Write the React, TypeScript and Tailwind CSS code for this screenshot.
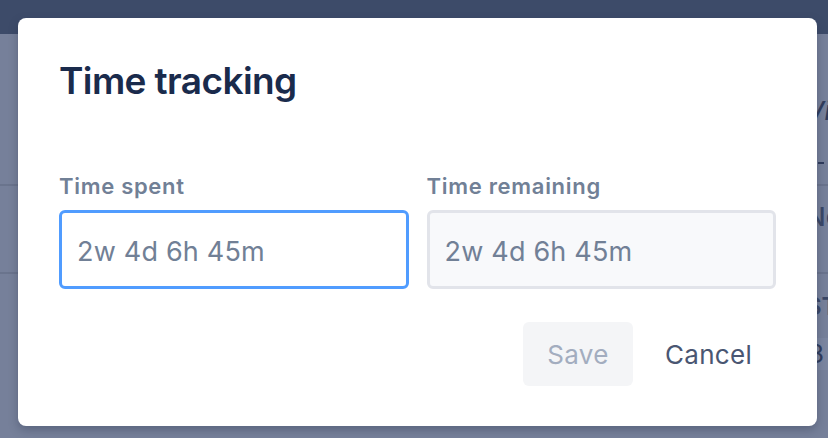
import React from "react";

export default function App() {
  return (
    <div
      className="relative w-[828px] h-[438px] overflow-hidden bg-[#76809a]"
      style={{ fontFamily: "Inter, 'Noto Sans', sans-serif" }}
    >
      {/* Background page (dimmed) */}
      <div className="flex flex-col w-full h-full">
        <div className="h-[34px] bg-[#3d4b69] shrink-0" />
        <div className="h-[152px] border-b-2 border-[#6a748d] flex flex-col pl-[806px] pt-[62px] text-[#2f3c5c]">
          <span className="text-[26px] leading-[30px] italic font-medium">View</span>
          <span className="mt-[36px] ml-[12px] w-[6px] h-[2px] bg-[#2f3c5c]" />
        </div>
        <div className="h-[88px] border-b-2 border-[#6a748d] pl-[806px] pt-[16px] text-[#3a4766] text-[26px] leading-[30px] font-medium">
          New
        </div>
        <div className="pl-[806px] pt-[18px] text-[#3a4766] text-[24px] leading-[30px] font-semibold">
          STATUS
        </div>
        <div className="mt-[16px] ml-[780px] h-[32px] bg-[#7b86a0] pl-[28px] text-[#2f3c5c] text-[26px] leading-[32px]">
          3
        </div>
      </div>

      {/* Modal */}
      <div className="absolute left-[18px] top-[18px] w-[799px] h-[408px] bg-white rounded-[8px] shadow-[0_4px_10px_rgba(40,50,75,0.35)] px-[41px] pt-[40px] flex flex-col">
        <h2 className="text-[37px] leading-[46px] font-semibold tracking-[-0.6px] text-[#1a2b4c]">
          Time tracking
        </h2>
        <div className="mt-[68px] grid grid-cols-2 gap-[18px]">
          <div className="flex flex-col">
            <label className="text-[22px] leading-[28px] font-semibold text-[#718096] tracking-[0.7px]">
              Time spent
            </label>
            <div className="mt-[10px] h-[79px] rounded-[6px] border-[3px] border-[#509cff] bg-white flex items-center px-[15px] pt-[5px]">
              <span className="text-[27px] tracking-[0.2px] text-[#718096]">2w 4d 6h 45m</span>
            </div>
          </div>
          <div className="flex flex-col">
            <label className="text-[22px] leading-[28px] font-semibold text-[#718096] tracking-[0.7px]">
              Time remaining
            </label>
            <div className="mt-[10px] h-[79px] rounded-[6px] border-[3px] border-[#e2e4ea] bg-[#f8f9fb] flex items-center px-[15px] pt-[5px]">
              <span className="text-[27px] tracking-[0.2px] text-[#718096]">2w 4d 6h 45m</span>
            </div>
          </div>
        </div>
        <div className="mt-[33px] flex justify-end gap-[8px]">
          <button className="w-[110px] h-[64px] rounded-[6px] bg-[#f4f5f7] text-[26px] tracking-[0.3px] text-[#a3adbf]">
            Save
          </button>
          <button className="w-[135px] h-[64px] rounded-[6px] text-[26px] tracking-[0.3px] text-[#4a5672]">
            Cancel
          </button>
        </div>
      </div>
    </div>
  );
}
